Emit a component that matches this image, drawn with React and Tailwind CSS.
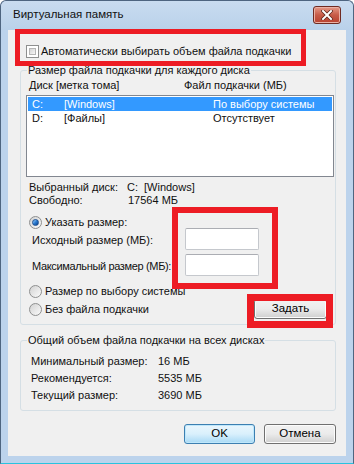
import React from 'react';

const font = { fontFamily: '"Liberation Sans", Arial, sans-serif' };

const Checkbox = () => (
    <div className="w-[13px] h-[13px] border border-[#8e8f8f] bg-white p-[2px] shrink-0">
        <div className="w-full h-full bg-gradient-to-br from-[#d4d4d4] to-[#f6f6f6] border border-[#b5b5b5]" />
    </div>
);

const Radio = ({ checked }) => (
    <div className="w-[13px] h-[13px] rounded-full border border-[#8e8f8f] bg-gradient-to-br from-[#d2d2d2] to-[#fbfbfb] flex items-center justify-center shrink-0">
        {checked && (
            <div className="w-[7px] h-[7px] rounded-full bg-gradient-to-br from-[#9cd3ff] via-[#2a7bd0] to-[#0d3f8a] border border-[#1d4f91]" />
        )}
    </div>
);

const WinButton = ({ children, primary, className = '' }) => (
    <div
        className={`h-[20px] rounded-[3px] border flex items-center justify-center text-[11.5px] text-black whitespace-nowrap ${
            primary
                ? 'border-[#3c7fb1] bg-gradient-to-b from-[#eaf6fd] via-[#d9f0fc] to-[#a7d9f5] shadow-[inset_0_0_0_1px_#bfe7fb]'
                : 'border-[#707070] bg-gradient-to-b from-[#f2f2f2] via-[#ebebeb] to-[#cfcfcf] shadow-[inset_0_0_0_1px_#fcfcfc]'
        } ${className}`}
    >
        {children}
    </div>
);

const Legend = ({ children }) => (
    <div className="-mt-[9px] ml-[6px] h-[16px] leading-[16px] px-[1px] w-fit bg-[#f0f0f0] whitespace-nowrap">{children}</div>
);

const App = () => {
    return (
        <div
            className="relative w-[354px] h-[464px] bg-[#bcd3ec] border border-[#4e6580] border-b-[#29c3df] rounded-t-[6px] text-[11px] text-[#111] whitespace-nowrap"
            style={font}
        >
            {/* Title bar */}
            <div className="h-[29px] flex items-center pl-[12px] pr-[12px] bg-gradient-to-b from-[#c9dcf0] to-[#b9d1ea] rounded-t-[6px]">
                <span className="text-[11.5px] mt-[-2px]">Виртуальная память</span>
                <div className="ml-auto mt-[-1px] w-[28px] h-[18px] rounded-[3px] border border-[#6f2b22] bg-gradient-to-b from-[#e59a89] via-[#c75b48] to-[#b8412f] flex items-center justify-center shadow-[inset_0_0_0_1px_#eab1a5]">
                    <svg width="12" height="10" viewBox="0 0 12 10">
                        <path d="M2 1 L10 9 M10 1 L2 9" stroke="#5a2219" strokeWidth="3.4" strokeLinecap="square" />
                        <path d="M2 1 L10 9 M10 1 L2 9" stroke="#ffffff" strokeWidth="2" strokeLinecap="square" />
                    </svg>
                </div>
            </div>

            {/* Client area */}
            <div className="mx-[7px] h-[426px] bg-[#f0f0f0] flex flex-col">
                <div className="mt-[13px] ml-[18px] h-[16px] flex items-center gap-[2px]">
                    <Checkbox />
                    <span className="leading-[16px]">Автоматически выбирать объем файла подкачки</span>
                </div>

                {/* Per-disk group */}
                <div className="mt-[11px] ml-[12px] w-[316px] h-[255px] border border-[#d5dfe5] rounded-[3px] flex flex-col">
                    <Legend>Размер файла подкачки для каждого диска</Legend>
                    <div className="h-[14px] leading-[14px] flex pl-[8px]">
                        <span className="w-[155px] shrink-0">Диск [метка тома]</span>
                        <span>Файл подкачки (МБ)</span>
                    </div>
                    <div className="mt-[3px] ml-[5px] w-[308px] h-[82px] border border-[#828790] bg-white p-[1px]">
                        <div className="h-[14px] leading-[14px] flex pl-[4px] bg-[#3399ff] text-white">
                            <span className="w-[32px] shrink-0">C:</span>
                            <span className="w-[149px] shrink-0">[Windows]</span>
                            <span>По выбору системы</span>
                        </div>
                        <div className="h-[14px] leading-[14px] flex pl-[4px]">
                            <span className="w-[32px] shrink-0">D:</span>
                            <span className="w-[149px] shrink-0">[Файлы]</span>
                            <span>Отсутствует</span>
                        </div>
                    </div>
                    <div className="mt-[4px] pl-[8px] h-[13px] leading-[13px] flex">
                        <span className="w-[98px] shrink-0">Выбранный диск:</span>
                        <span className="w-[17px] shrink-0">C:</span>
                        <span>[Windows]</span>
                    </div>
                    <div className="pl-[8px] h-[13px] leading-[13px] flex">
                        <span className="w-[99px] shrink-0">Свободно:</span>
                        <span>17564 МБ</span>
                    </div>
                    <div className="mt-[8px] pl-[8px] h-[14px] flex items-center gap-[3px]">
                        <Radio checked />
                        <span>Указать размер:</span>
                    </div>
                    <div className="-mt-[1px] h-[22px] flex items-center">
                        <span className="pl-[11px] w-[164px] shrink-0 pt-[3px]">Исходный размер (МБ):</span>
                        <div className="w-[74px] h-[22px] bg-white border border-[#c5c8cd] border-t-[#abadb3] rounded-[2px]" />
                    </div>
                    <div className="mt-[4px] h-[22px] flex items-center">
                        <span className="pl-[11px] w-[164px] shrink-0 pt-[2px] tracking-[-0.35px]">Максимальный размер (МБ):</span>
                        <div className="w-[74px] h-[22px] bg-white border border-[#c5c8cd] border-t-[#abadb3] rounded-[2px]" />
                    </div>
                    <div className="mt-[8px] pl-[8px] h-[14px] flex items-center gap-[3px]">
                        <Radio />
                        <span>Размер по выбору системы</span>
                    </div>
                    <div className="mt-[1px] pl-[8px] h-[20px] flex items-center gap-[3px]">
                        <Radio />
                        <span>Без файла подкачки</span>
                        <WinButton className="ml-auto mr-[8px] w-[73px]">Задать</WinButton>
                    </div>
                </div>

                {/* Totals group */}
                <div className="mt-[15px] ml-[12px] w-[316px] h-[71px] border border-[#d5dfe5] rounded-[3px] flex flex-col">
                    <Legend>Общий объем файла подкачки на всех дисках</Legend>
                    <div className="mt-[5px] pl-[10px] h-[17px] leading-[17px] flex">
                        <span className="w-[127px] shrink-0">Минимальный размер:</span>
                        <span>16 МБ</span>
                    </div>
                    <div className="pl-[10px] h-[17px] leading-[17px] flex">
                        <span className="w-[127px] shrink-0">Рекомендуется:</span>
                        <span>5535 МБ</span>
                    </div>
                    <div className="pl-[10px] h-[17px] leading-[17px] flex">
                        <span className="w-[127px] shrink-0">Текущий размер:</span>
                        <span>3690 МБ</span>
                    </div>
                </div>

                <div className="mt-[13px] mr-[10px] flex justify-end gap-[9px]">
                    <WinButton primary className="w-[71px]">OK</WinButton>
                    <WinButton className="w-[72px]">Отмена</WinButton>
                </div>
            </div>

            {/* Red annotation frames */}
            <div className="absolute left-[14px] top-[28px] w-[291px] h-[37px] border-[5px] border-[#ed1c24]" />
            <div className="absolute left-[171px] top-[206px] w-[106px] h-[82px] border-[6px] border-[#ed1c24]" />
            <div className="absolute left-[246px] top-[293px] w-[86px] h-[34px] border-[7px] border-[#ed1c24]" />
        </div>
    );
};

export default App;
